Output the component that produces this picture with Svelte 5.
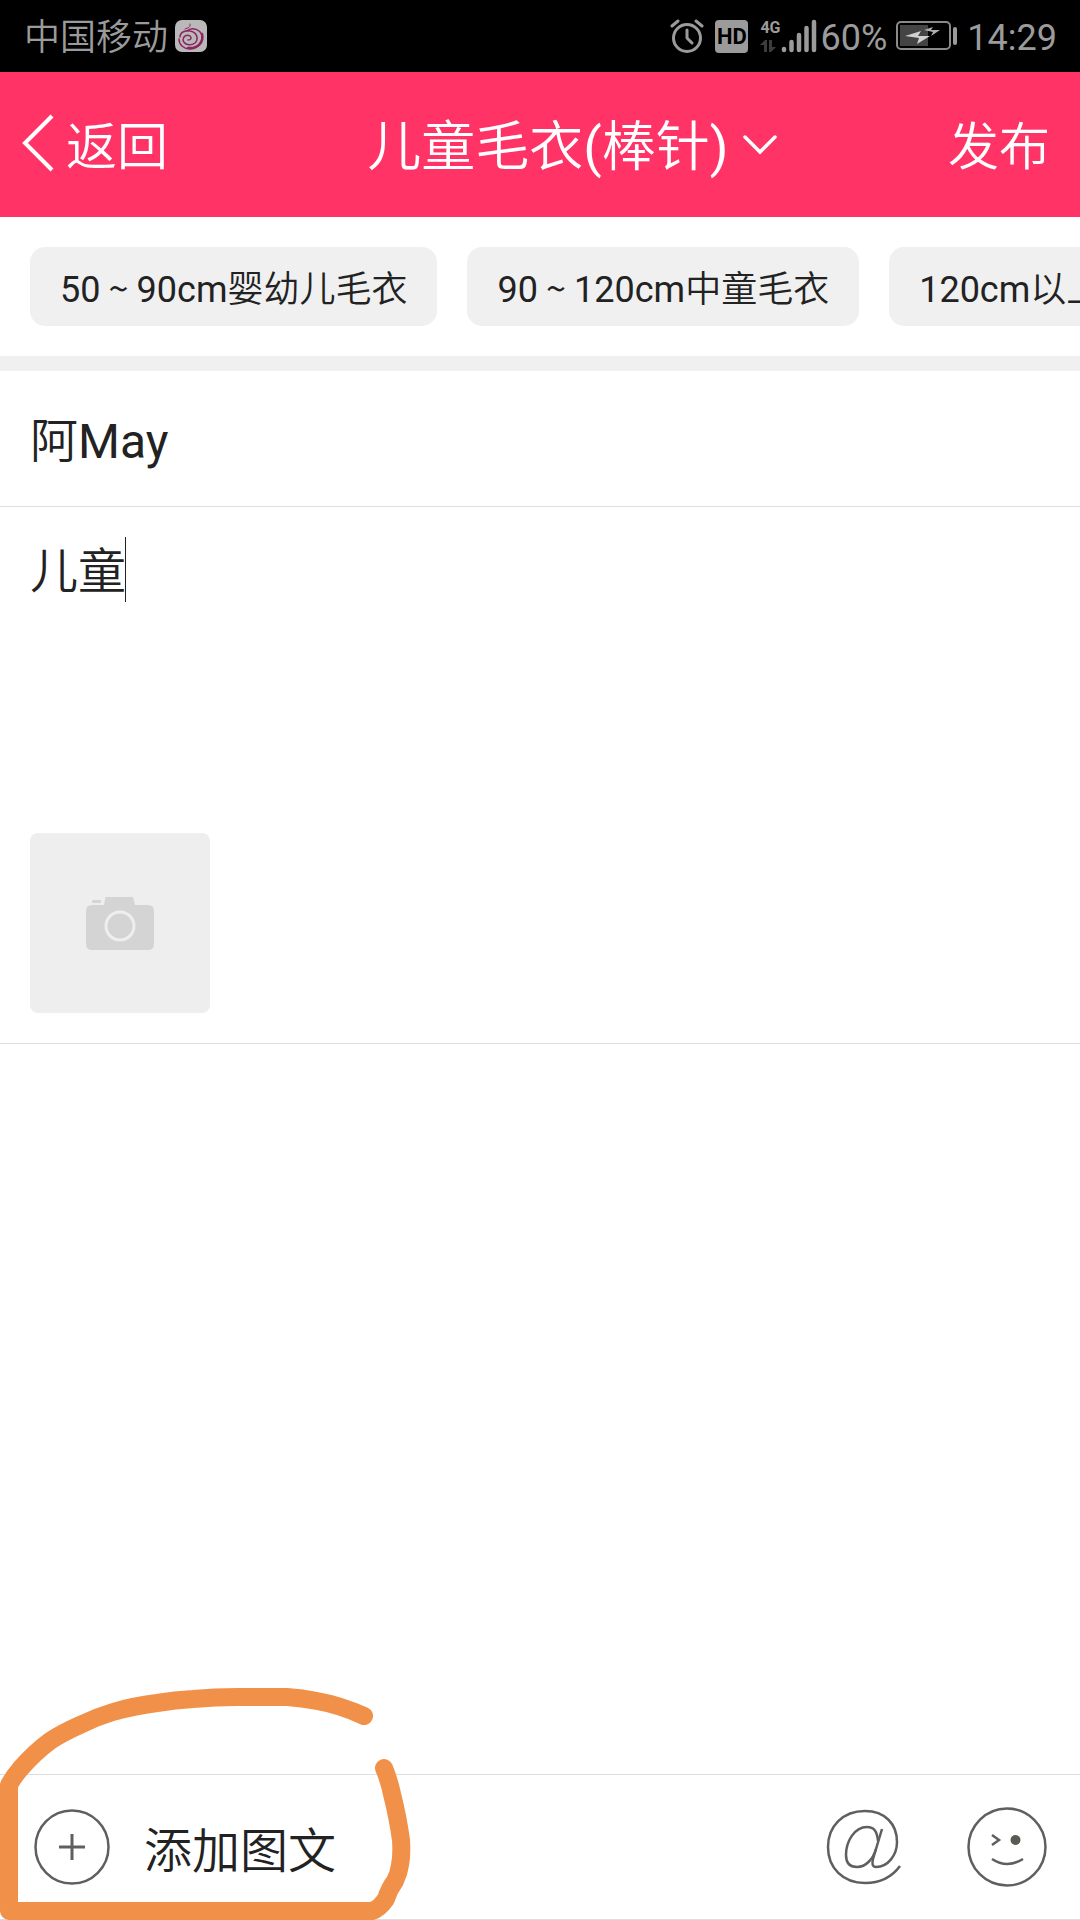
<script>
  let category = $state("儿童毛衣(棒针)");
  let title = $state("阿May");
  let content = $state("儿童");

  const categories = ["儿童毛衣(棒针)"];
  const tags = [
    { from: "50", to: "90cm婴幼儿毛衣" },
    { from: "90", to: "120cm中童毛衣" },
    { from: "120cm以上" },
  ];
</script>

<div class="page">
  <div class="status">
    <span class="label">中国移动</span>
    <svg class="carrier-app" width="32" height="32" viewBox="0 0 32 32">
      <rect width="32" height="32" rx="7" fill="#b9b9b9" />
      <g fill="none" stroke="#8e2460" stroke-linecap="round">
        <path d="M10 9C13 8 16 7 15 4" stroke-width="1" />
        <path d="M12 11C17 6 26 10 27 16C28 24 21 29 15 29C9 29 4 25 4 19" stroke-width="1.500" />
        <path d="M27 14C29 22 23 29 13 28" stroke-width="2.500" />
        <path d="M5 17C5 12 11 10 15 11C22 12 24 19 20 23C16 26 9 25 8 20C8 16 12 14 15 16C17 18 16 20 13 20" stroke-width="1.500" />
      </g>
    </svg>
    <div class="spacer"></div>
    <svg class="alarm" width="34" height="34" viewBox="0 0 34 34" fill="none" stroke="#9b9b9b" stroke-linecap="round">
      <circle cx="17" cy="19" r="13.500" stroke-width="3" />
      <path d="M17 11V19L22 24" stroke-width="3" stroke-linejoin="round" />
      <path d="M2 7L8 2M26 2L32 7" stroke-width="3" />
    </svg>
    <span class="hd">HD</span>
    <div class="network">
      <div class="net-type">
        <span>4G</span>
        <svg width="17" height="12" viewBox="0 0 17 12" fill="#3c3c3c">
          <path d="M0 5L5 0H7V12H4V5ZM9 0H12V7H16L11 12H9Z" />
        </svg>
      </div>
      <svg width="36" height="34" viewBox="0 0 36 34" stroke="#9b9b9b" stroke-width="4.500" stroke-linecap="round">
        <path d="M3 30V31M10.500 23V31M18 16V31M25.500 9V31M33 3V31" />
      </svg>
    </div>
    <span class="label percent">60%</span>
    <svg class="battery" width="61" height="30" viewBox="0 0 61 30">
      <rect x="1" y="1" width="53" height="27" rx="4" fill="none" stroke="#8a8a8a" stroke-width="2" />
      <rect x="4" y="4" width="28" height="21" fill="#444" />
      <path d="M9 15L25 10L22 15H34L21 23L23 17Z" fill="#d0d0d0" />
      <path d="M28 9L37 6L35 9H44L35 15L37 11Z" fill="#b0b0b0" />
      <rect x="57" y="6" width="4" height="18" rx="2" fill="#9b9b9b" />
    </svg>
    <span class="label">14:29</span>
  </div>

  <header class="header">
    <button class="back">
      <svg width="32" height="58" viewBox="0 0 32 58" fill="none" stroke="#fff" stroke-width="4">
        <path d="M30 2L3 29L30 56" />
      </svg>
      <span>返回</span>
    </button>
    <div class="category">
      <select bind:value={category} aria-label="分类">
        {#each categories as item}
          <option value={item}>{item}</option>
        {/each}
      </select>
      <svg width="34" height="20" viewBox="0 0 34 20" fill="none" stroke="#fff" stroke-width="3.500" stroke-linecap="round">
        <path d="M2 2L17 17L32 2" />
      </svg>
    </div>
    <button class="publish">发布</button>
  </header>

  <nav class="tags">
    {#each tags as tag}
      <button class="tag">{tag.from}{#if tag.to}<span class="tilde">{" ~ "}</span>{tag.to}{/if}</button>
    {/each}
  </nav>

  <main class="editor">
    <input class="title" aria-label="标题" bind:value={title} />
    <div class="content">
      <textarea aria-label="内容" bind:value={content}></textarea>
      <span class="caret"></span>
      <button class="photo" aria-label="添加图片">
        <svg width="68" height="54" viewBox="0 0 68 54">
          <path d="M6 8H18L19.500 0H47L49 8H62Q68 8 68 14V47Q68 53 62 53H6Q0 53 0 47V14Q0 8 6 8Z" fill="#d4d4d4" />
          <rect x="6" y="3" width="9" height="3" rx="1" fill="#d4d4d4" />
          <circle cx="34" cy="29" r="14" fill="none" stroke="#eee" stroke-width="3" />
        </svg>
      </button>
    </div>
  </main>

  <footer class="toolbar">
    <button class="add">
      <svg width="76" height="76" viewBox="0 0 76 76" fill="none" stroke="#5f5f5f">
        <circle cx="38" cy="38" r="36.500" stroke-width="2.500" />
        <path d="M38 25V51M25 38H51" stroke-width="3" />
      </svg>
      <span>添加图文</span>
    </button>
    <div class="spacer"></div>
    <button class="icon" aria-label="提到">
      <svg width="80" height="80" viewBox="0 0 80 80" fill="none" stroke="#5f5f5f" stroke-width="2.500">
        <path d="M77 59C69 70 57 76 42 76C20 76 5 61 5 40C5 19 20 4 42 4C62 4 74 17 74 35C74 48 65 60 53 60C49 60 49 56 50 52L59 22" />
        <path d="M55 34C54 24 51 20 44 20C31 20 23 35 23 48C23 56 27 60 34 60C43 60 50 52 53 42" />
      </svg>
    </button>
    <button class="icon" aria-label="表情">
      <svg width="80" height="80" viewBox="0 0 80 80" fill="none" stroke="#5f5f5f" stroke-width="2.500">
        <circle cx="40" cy="40" r="38.500" />
        <path d="M25 28L32 33L25 38M25 52Q40 62 56 52" />
        <circle cx="48.500" cy="33" r="5" fill="#5a5a54" stroke="none" />
      </svg>
    </button>
  </footer>

  <svg class="marker" width="430" height="260" viewBox="0 0 430 260" fill="none" stroke="#f19149" stroke-width="18" stroke-linecap="round" stroke-linejoin="round">
    <path d="M364 56Q340 45 317 41Q302 38 287 37H237Q215 37 193 39Q175 40 157 43Q133 46 113 52Q96 57 80 65Q62 73 50 81Q34 93 21 108Q14 116 9 125V251H372Q379 249 386 239Q389 229 395 221Q399 213 400 205Q402 195 401 180Q398 158 392 134Q389 120 384 108" />
  </svg>
</div>

<style>
  :global(body) {
    margin: 0;
    background: #fff;
  }

  .page {
    position: relative;
    display: flex;
    flex-direction: column;
    min-height: 100vh;
    overflow: hidden;
    color: #222;
    font-family: Roboto, "Noto Sans CJK SC DemiLight", "Noto Sans CJK SC", sans-serif;
  }

  button,
  input,
  select,
  textarea {
    margin: 0;
    padding: 0;
    border: none;
    outline: none;
    background: none;
    color: inherit;
    font: inherit;
  }

  svg {
    display: block;
    flex-shrink: 0;
  }

  .spacer {
    flex: 1;
  }

  .status {
    display: flex;
    align-items: center;
    height: 72px;
    padding: 0 23px 0 24px;
    background: #000;
    color: #9b9b9b;
    font-size: 36px;
  }

  .label {
    padding-top: 4px;
    line-height: 72px;
  }

  .carrier-app {
    margin-left: 7px;
  }

  .hd {
    width: 33px;
    height: 33px;
    margin: 0 12px 0 11px;
    border-radius: 4px;
    background: #9b9b9b;
    color: #000;
    font-size: 22px;
    font-weight: 700;
    line-height: 34px;
    text-align: center;
  }

  .network {
    display: flex;
    margin-right: 4px;
  }

  .net-type span {
    display: block;
    height: 21px;
    font-size: 16px;
    font-weight: 700;
    line-height: 18px;
  }

  .percent {
    margin-right: 9px;
  }

  .battery {
    margin-right: 10px;
  }

  .header {
    display: grid;
    grid-template-columns: 1fr auto 1fr;
    align-items: center;
    height: 145px;
    padding: 0 30px 0 22px;
    background: #ff3366;
    color: #fff;
    font-size: 51px;
  }

  .back {
    display: flex;
    align-items: center;
    gap: 12px;
    justify-self: start;
  }

  .back,
  .publish {
    padding-bottom: 3px;
  }

  .category {
    display: flex;
    align-items: center;
    gap: 14px;
    margin-left: 72px;
    font-size: 54px;
  }

  .category select {
    padding-top: 5px;
    appearance: none;
    field-sizing: content;
  }

  .publish {
    justify-self: end;
  }

  .tags {
    display: flex;
    gap: 30px;
    padding: 30px;
    border-bottom: 15px solid #f0f0f0;
    overflow: hidden;
  }

  .tag {
    flex-shrink: 0;
    height: 79px;
    padding: 0 30px 2px;
    border-radius: 15px;
    background: #f0f0f0;
    font-size: 36px;
    white-space: nowrap;
  }

  .tilde {
    font-family: "Noto Sans CJK SC", sans-serif;
    line-height: 36px;
    white-space: pre;
  }

  .editor {
    flex: 1;
    font-size: 48px;
  }

  .title {
    display: block;
    box-sizing: border-box;
    width: 100%;
    height: 136px;
    padding: 0 30px 4px;
    border-bottom: 1px solid #ddd;
  }

  .content {
    position: relative;
    padding: 30px;
    border-bottom: 1px solid #ddd;
  }

  textarea {
    display: block;
    width: 100%;
    height: 266px;
    margin-bottom: 30px;
    line-height: 70px;
    resize: none;
  }

  .caret {
    position: absolute;
    top: 30px;
    left: 125px;
    width: 1px;
    height: 65px;
    background: #222;
  }

  .photo {
    display: grid;
    place-items: center;
    width: 180px;
    height: 180px;
    padding-top: 2px;
    border-radius: 8px;
    background: #eee;
  }

  .toolbar {
    display: flex;
    align-items: center;
    gap: 64px;
    height: 144px;
    padding: 0 33px 0 34px;
    border-top: 1px solid #ddd;
    border-bottom: 1px solid #ddd;
    font-size: 48px;
  }

  .add {
    display: flex;
    align-items: center;
    gap: 34px;
  }

  .marker {
    position: absolute;
    bottom: 0;
    left: 0;
    pointer-events: none;
  }
</style>
